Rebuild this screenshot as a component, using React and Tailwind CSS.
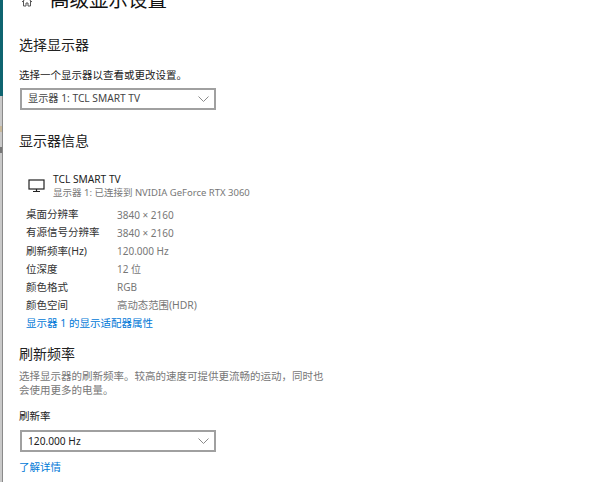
const cjk = { fontFamily: '"Noto Sans", "Noto Sans CJK SC", sans-serif' };

function Chevron() {
  return (
    <svg width="11" height="6" viewBox="0 0 11 6" fill="none" stroke="#8a8a8a" strokeWidth="1">
      <path d="M0.5 0.5 L5.5 5.5 L10.5 0.5" />
    </svg>
  );
}

function Select({ children, dark }) {
  return (
    <div className={`ml-[1px] w-[196px] h-[22px] border-2 border-[#a0a0a0] flex items-center justify-between pl-[6px] pr-[4px] text-[10.2px] ${dark ? "text-[#222]" : "text-[#444]"}`}>
      <span>{children}</span>
      <span className="mr-[1px]"><Chevron /></span>
    </div>
  );
}

const rows = [
  ["桌面分辨率", "3840 × 2160", "text-[10px]"],
  ["有源信号分辨率", "3840 × 2160", "text-[10px]"],
  ["刷新频率(Hz)", "120.000 Hz", "text-[10px]"],
  ["位深度", "12 位", "text-[10px]"],
  ["颜色格式", "RGB", "text-[10px]"],
  ["颜色空间", "高动态范围(HDR)", "text-[10.4px]"],
];

export default function App() {
  return (
    <div className="w-[600px] h-[482px] overflow-hidden bg-white flex" style={cjk}>
      <div className="w-[3px] shrink-0 flex flex-col">
        <div className="h-[96px] bg-[#0f6470]" />
        <div className="flex-1 bg-[#c9c9c9] border-r border-[#8a8a8a] flex flex-col">
          <div className="h-[30px]" />
          <div className="h-[6px] bg-[#c8b89a]" />
          <div className="h-[15px]" />
          <div className="h-[6px] bg-[#777777]" />
        </div>
      </div>
      <div className="flex-1 pl-[16px] text-[#222]">
        <div className="h-[10px] relative">
          <svg className="absolute left-[2px] top-[-3px]" width="12" height="10" viewBox="0 0 12 10" fill="none" stroke="#555" strokeWidth="1">
            <path d="M1 5 L6 0.5 L11 5 M2.5 4 V9 H5 V6 H7 V9 H9.5 V4" />
          </svg>
          <div className="absolute left-[31px] top-[-14px] text-[19.5px] leading-[28px] whitespace-nowrap text-[#111]">高级显示设置</div>
        </div>
        <div className="mt-[25px] text-[14px] leading-[20px]">选择显示器</div>
        <div className="mt-[12px] text-[10.5px] leading-[16px]">选择一个显示器以查看或更改设置。</div>
        <div className="mt-[5px]"><Select>显示器 1: TCL SMART TV</Select></div>
        <div className="mt-[21px] text-[14px] leading-[20px]">显示器信息</div>
        <div className="mt-[22px] ml-[9px] flex items-center">
          <svg width="17" height="14" viewBox="0 0 17 14" fill="none" stroke="#222" strokeWidth="1.2">
            <rect x="1" y="1" width="15" height="9" />
            <path d="M8.5 10 V12.5 M5 12.5 H12" />
          </svg>
          <div className="ml-[8px]">
            <div className="text-[10.2px] leading-[13px]">TCL SMART TV</div>
            <div className="text-[9.5px] leading-[13px] text-[#777] whitespace-nowrap">显示器 1: 已连接到 NVIDIA GeForce RTX 3060</div>
          </div>
        </div>
        <div className="mt-[7px] ml-[7px]">
          {rows.map(([k, v, size]) => (
            <div key={k} className="flex h-[18.2px] items-center text-[10.5px]">
              <span className="w-[91px] text-[#333]">{k}</span>
              <span className={`text-[#777] ${size}`}>{v}</span>
            </div>
          ))}
          <div className="h-[18.2px] flex items-center text-[10.5px] text-[#0078d7]">显示器 1 的显示适配器属性</div>
        </div>
        <div className="mt-[11px] text-[14px] leading-[20px]">刷新频率</div>
        <div className="mt-[5px] w-[310px] text-[10.5px] leading-[14px] text-[#777]">选择显示器的刷新频率。较高的速度可提供更流畅的运动，同时也会使用更多的电量。</div>
        <div className="mt-[12px] text-[10.5px] leading-[14px]">刷新率</div>
        <div className="mt-[7px]"><Select dark>120.000 Hz</Select></div>
        <div className="mt-[8px] text-[10.5px] leading-[14px] text-[#0078d7]">了解详情</div>
      </div>
    </div>
  );
}
